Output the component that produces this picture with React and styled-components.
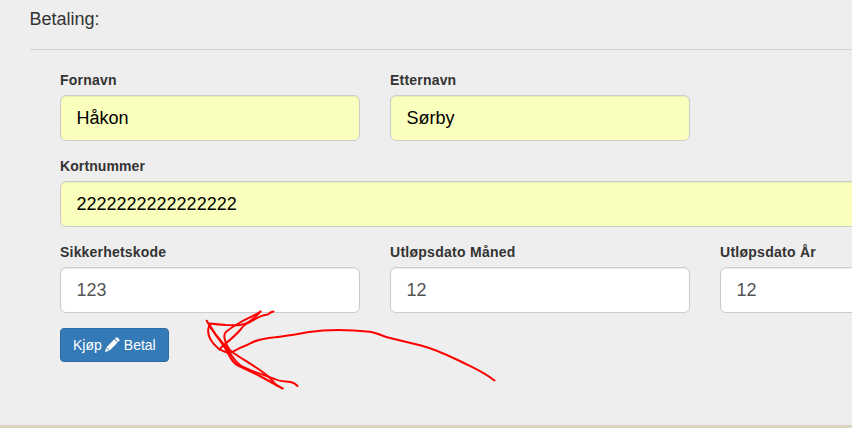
import React from "react";
import styled, { createGlobalStyle } from "styled-components";

const GlobalStyle = createGlobalStyle`
  *, *::before, *::after { box-sizing: border-box; }
  html, body { margin: 0; background: #eee; overflow: hidden; }
  body {
    font-family: "Liberation Sans", Arial, sans-serif;
    font-size: 14px;
    line-height: 20px;
    color: #333;
  }
`;

const Page = styled.main`
  position: relative;
  display: flex;
  flex-direction: column;
  width: 852px;
  height: 428px;
  padding-left: 30px;
  overflow: hidden;
`;

const Heading = styled.h4`
  margin: 9px 0 0 -0.5px;
  font-size: 18px;
  font-weight: 400;
  line-height: 20px;
`;

const Divider = styled.hr`
  width: 100%;
  margin: 20px 0;
  border: 0;
  border-top: 1px solid #d4d4d4;
`;

const Form = styled.form`
  display: flex;
  flex-direction: column;
  gap: 15px;
  width: 960px;
  padding-left: 30px;
`;

const Row = styled.div`
  display: grid;
  grid-template-columns: ${({ $full }) => ($full ? "960px" : "repeat(3, 300px)")};
  column-gap: 30px;
`;

const Group = styled.div`
  display: flex;
  flex-direction: column;
  gap: 5px;
`;

const Label = styled.label`
  font-weight: 700;
  line-height: 20px;
  letter-spacing: ${({ $tracking }) => $tracking || "0.2px"};
`;

const Input = styled.input`
  width: 100%;
  height: 46px;
  padding: 10px 15.5px;
  border: 1px solid #ccc;
  border-radius: 6px;
  outline: 0;
  background: ${({ $autofilled }) => ($autofilled ? "#faffbd" : "#fff")};
  box-shadow: inset 0 1px 1px rgba(0, 0, 0, 0.075);
  color: ${({ $autofilled }) => ($autofilled ? "#000" : "#555")};
  font-family: inherit;
  font-size: 18px;
  line-height: 24px;
`;

const SubmitButton = styled.button`
  display: flex;
  align-items: center;
  align-self: flex-start;
  gap: 3.5px;
  width: 109px;
  height: 34px;
  padding: 0 12px;
  border: 1px solid #2e6da4;
  border-radius: 4px;
  background: #337ab7;
  color: #fff;
  font-family: inherit;
  font-size: 14px;
  line-height: 20px;
  white-space: nowrap;

  svg { margin-bottom: 2px; }
`;

const Footer = styled.footer`
  flex: none;
  height: 3px;
  margin: auto 0 0 -30px;
  background: #dad5c2;
`;

const Scribble = styled.svg`
  position: absolute;
  inset: 0;
  width: 852px;
  height: 428px;
  pointer-events: none;
  fill: none;
  stroke: #f00;
  stroke-width: 2;
  stroke-linecap: round;
  stroke-linejoin: round;
`;

function Pencil() {
  return (
    <svg width="15" height="15" viewBox="0 0 14 14" fill="currentColor" aria-hidden="true">
      <path d="M10.4.5Q11-.1 11.6.5L13.4 2.3Q14 2.9 13.4 3.5L12.3 4.6L9.3 1.6ZM8.7 2.2L11.7 5.2L4.4 12.5L1.4 9.5ZM1 10.1L3.8 12.9L0 14Z" />
    </svg>
  );
}

function Field({ label, value, autofilled, tracking }) {
  return (
    <Group>
      <Label $tracking={tracking}>{label}</Label>
      <Input aria-label={label} defaultValue={value} $autofilled={autofilled} />
    </Group>
  );
}

export default function App() {
  return (
    <>
      <GlobalStyle />
      <Page>
        <Heading>Betaling:</Heading>
        <Divider />
        <Form>
          <Row>
            <Field label="Fornavn" value="Håkon" autofilled />
            <Field label="Etternavn" value="Sørby" autofilled />
          </Row>
          <Row $full>
            <Field label="Kortnummer" value="2222222222222222" autofilled tracking="0.1px" />
          </Row>
          <Row>
            <Field label="Sikkerhetskode" value="123" />
            <Field label="Utløpsdato Måned" value="12" tracking="0.27px" />
            <Field label="Utløpsdato År" value="12" tracking="0.27px" />
          </Row>
          <SubmitButton type="button">
            <span>Kjøp</span>
            <Pencil />
            <span>Betal</span>
          </SubmitButton>
        </Form>
        <Footer />
        <Scribble viewBox="0 0 852 428" aria-hidden="true">
          <path d="M494.500 380.500C485 373 476 369 465 363.500C448 355.500 438 350 421 345.500L388 337.500C380 335.500 377 332.500 370 331.700C352 330 327 329.500 309 332C297 334 286 336 275 337.300C267 338 259 339 251 343C246 346 241 347 237 349.500Q231 353 228 352.700Q222 351 219 349C213 344 207 337 208.300 329L209.700 323.500Q218 324.500 226 325L238 325.300Q244 325 250 322C256 319 260 315 268 314.500Q270 312 273.500 311.500" />
          <path d="M206.700 320.700Q210 328 216 335L225 346C231 354 234 361 240 365C247 370 262 374 274.700 379C280 382 289 381 292.500 382.500Q295 383.500 297.500 386" />
          <path d="M209 324Q216 336 223 345C229 353 231 363 239 366L258 375L282.700 388.500" />
          <path d="M260.500 311.500C254 316 248 318 240 322.500C234 326 228 330 225.500 332.500Q223.500 335 225 340Q227 348 232 352C245 361 262 370 270 378L276.500 385.500" />
          <path d="M260.500 311.500C253 321 246 322 241 329C236 335 230 340 225 344Q221 347 219.500 349.500" />
        </Scribble>
      </Page>
    </>
  );
}
